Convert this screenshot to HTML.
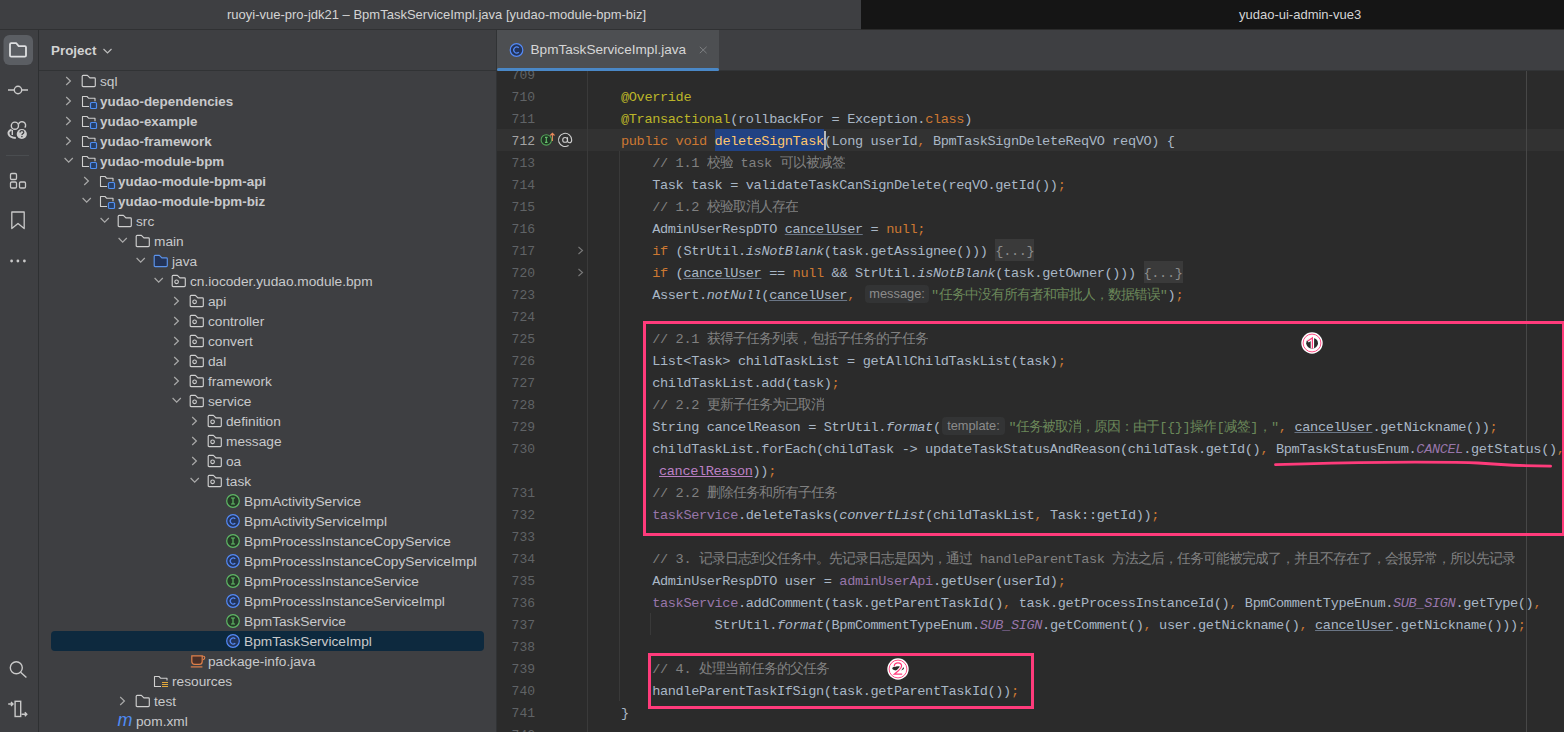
<!DOCTYPE html>
<html><head><meta charset="utf-8"><style>
*{margin:0;padding:0;box-sizing:border-box}
html,body{width:1564px;height:732px;overflow:hidden;background:#2b2b2b}
body{position:relative;font-family:"Liberation Sans",sans-serif}
.abs{position:absolute}
.title{left:0;top:0;height:29px;color:#d4d4d4;font-size:13px;line-height:29px;white-space:nowrap}
.tree{position:absolute;white-space:nowrap;font-size:13.7px;color:#c8c9cb;line-height:20px;height:20px}
.tree b{font-weight:bold;font-size:13.4px}
.code{position:absolute;left:589.8px;white-space:pre;font-family:"Liberation Mono",monospace;font-size:13.6px;letter-spacing:-0.36px;line-height:22px;height:22px;color:#a9b7c6}
.ln{position:absolute;left:497px;width:38px;text-align:right;white-space:pre;font-family:"Liberation Mono",monospace;font-size:13px;line-height:22px;color:#606366}
.k{color:#cc7832}
.an{color:#bbb529}
.cm{color:#808080}
.s{color:#6a8759}
.f{color:#9876aa}
.i{font-style:italic}
.u{text-decoration:underline;text-decoration-color:#6a7585;text-decoration-thickness:1px;text-underline-offset:0.5px}
.z{display:inline-block;vertical-align:top;overflow:hidden;height:22px;width:13px}
.hint{display:inline-block;vertical-align:top;position:relative;height:22px}
.hint i{position:absolute;top:0px;letter-spacing:0;height:18px;border-radius:4px;background:#333435;color:#8b8b8b;font-style:normal;font-family:"Liberation Sans",sans-serif;font-size:12.8px;line-height:18px;text-align:center}
.fold{display:inline-block;vertical-align:top;height:22px;margin-top:-2px;padding-top:2px;background:#3a3a3a;color:#8c8c8c}
</style></head>
<body>
<div class="abs" style="left:0;top:0;width:861px;height:29px;background:#3e3f42"></div><div class="abs" style="left:861px;top:0;width:703px;height:29px;background:#151515"></div><div class="abs" style="left:0;top:29px;width:861px;height:1px;background:#303133"></div><div class="abs title" style="left:227px;top:0">ruoyi-vue-pro-jdk21 – BpmTaskServiceImpl.java [yudao-module-bpm-biz]</div><div class="abs title" style="left:1239px;top:0">yudao-ui-admin-vue3</div><div class="abs" style="left:0;top:30px;width:38px;height:702px;background:#3e3f42"></div><div class="abs" style="left:38px;top:30px;width:1px;height:702px;background:#2e3032"></div><div class="abs" style="left:39px;top:30px;width:458px;height:702px;background:#3e3f42"></div><div class="abs" style="left:39px;top:70px;width:458px;height:1px;background:#313335"></div><div class="abs" style="left:51px;top:41px;font-size:13.4px;font-weight:bold;color:#d2d2d2;line-height:20px">Project</div><svg class="abs" style="left:102px;top:48px" width="12" height="8"><path d="M1.5 1 L5.5 5 L9.5 1" fill="none" stroke="#bdbdbd" stroke-width="1.2"/></svg>
<svg class="abs" style="left:0;top:30px" width="38" height="702">
 <rect x="3.5" y="5" width="29.5" height="30" rx="6" fill="#5b5e63"/>
 <path d="M11.2 13.2 h5.1 l2.4 2.9 h6.1 q1.2 0 1.2 1.2 v8.2 q0 1.2 -1.2 1.2 h-13.6 q-1.2 0 -1.2 -1.2 v-11.1 q0 -1.2 1.2 -1.2 z" fill="none" stroke="#dfe0e2" stroke-width="1.8" stroke-linejoin="round"/>
 <g fill="none" stroke="#c9c9c9" stroke-width="1.4">
  <path d="M8 60 h6.3 M21.7 60 h6.3"/><circle cx="18" cy="60" r="3.7"/>
 </g>
 <g fill="none" stroke="#cdcdcd" stroke-width="1.4">
  <circle cx="14.9" cy="95.7" r="3.6"/>
  <path d="M18.6 94.2 A3.6 3.6 0 1 1 24.8 97.6"/>
  <path d="M12.3 100 v5"/>
 </g>
 <path d="M11.6 99.6 C 6.8 101.5, 7.2 107.3, 15.8 107.9" fill="none" stroke="#cdcdcd" stroke-width="2"/>
 <circle cx="21.8" cy="104" r="5.6" fill="#3e3f42"/>
 <circle cx="21.8" cy="104" r="5.1" fill="#cdcdcd"/>
 <path d="M20 102.5 q0 -1.9 1.9 -1.9 q1.9 0 1.9 1.7 q0 1.1 -1.2 1.6 q-0.6 0.3 -0.6 1" fill="none" stroke="#3e3f42" stroke-width="1.3"/>
 <circle cx="21.9" cy="106.6" r="0.8" fill="#3e3f42"/>
 <path d="M6 125.5 h23" stroke="#4a4d50" stroke-width="1"/>
 <g fill="none" stroke="#c9c9c9" stroke-width="1.3">
  <rect x="10.5" y="143.5" width="6" height="6" rx="1.2"/><rect x="10.5" y="152" width="6" height="6" rx="1.2"/><rect x="19.5" y="152" width="6" height="6" rx="1.2"/>
  <path d="M11.8 182 v16.5 l6.2 -5 l6.2 5 v-16.5 z" stroke-linejoin="round"/>
 </g>
 <g fill="#c9c9c9"><circle cx="11.6" cy="231" r="1.4"/><circle cx="17.9" cy="231" r="1.4"/><circle cx="24.4" cy="231" r="1.4"/></g>
 <g fill="none" stroke="#c9c9c9" stroke-width="1.4">
  <circle cx="16.3" cy="637.8" r="6"/><path d="M20.6 642.3 l5.8 5.3"/>
  <rect x="15.1" y="671.3" width="5.6" height="15.2"/>
  <path d="M8.2 674 h4.5 M11 672 l2 2 l-2 2 M21.5 684.2 h5 M24.8 682.2 l2 2 l-2 2"/>
 </g>
</svg><div class="abs" style="left:51px;top:631px;width:433px;height:20px;border-radius:4px;background:#0d293e"></div><svg class="abs" style="left:64.8px;top:76px" width="8" height="11"><path d="M1.2 1 L5.4 5 L1.2 9" fill="none" stroke="#a9a9a9" stroke-width="1.2"/></svg><svg class="abs" style="left:81px;top:73px" width="16" height="16"><path d="M1.2 3.3 q0 -1 1 -1 h4.2 l2.5 2.6 h4.5 q0.9 0 0.9 0.9 v6.8 q0 1 -1 1 h-11.1 q-1 0 -1 -1 z" fill="#3e3f42" stroke="#cfcfcf" stroke-width="1.15" stroke-linejoin="round"/></svg><div class="tree" style="left:100px;top:72px">sql</div><svg class="abs" style="left:64.8px;top:96px" width="8" height="11"><path d="M1.2 1 L5.4 5 L1.2 9" fill="none" stroke="#a9a9a9" stroke-width="1.2"/></svg><svg class="abs" style="left:81px;top:93px" width="18" height="18"><path d="M8 13.5 h-6.5 v-10 h4.5 l1.8 1.8 h6.2 v3" fill="none" stroke="#cfcfcf" stroke-width="1.1" stroke-linejoin="round"/><rect x="9.5" y="9.5" width="6" height="6" rx="1" fill="#253e66" stroke="#4f8ff2" stroke-width="1.2"/></svg><div class="tree" style="left:100px;top:92px"><b>yudao-dependencies</b></div><svg class="abs" style="left:64.8px;top:116px" width="8" height="11"><path d="M1.2 1 L5.4 5 L1.2 9" fill="none" stroke="#a9a9a9" stroke-width="1.2"/></svg><svg class="abs" style="left:81px;top:113px" width="18" height="18"><path d="M8 13.5 h-6.5 v-10 h4.5 l1.8 1.8 h6.2 v3" fill="none" stroke="#cfcfcf" stroke-width="1.1" stroke-linejoin="round"/><rect x="9.5" y="9.5" width="6" height="6" rx="1" fill="#253e66" stroke="#4f8ff2" stroke-width="1.2"/></svg><div class="tree" style="left:100px;top:112px"><b>yudao-example</b></div><svg class="abs" style="left:64.8px;top:136px" width="8" height="11"><path d="M1.2 1 L5.4 5 L1.2 9" fill="none" stroke="#a9a9a9" stroke-width="1.2"/></svg><svg class="abs" style="left:81px;top:133px" width="18" height="18"><path d="M8 13.5 h-6.5 v-10 h4.5 l1.8 1.8 h6.2 v3" fill="none" stroke="#cfcfcf" stroke-width="1.1" stroke-linejoin="round"/><rect x="9.5" y="9.5" width="6" height="6" rx="1" fill="#253e66" stroke="#4f8ff2" stroke-width="1.2"/></svg><div class="tree" style="left:100px;top:132px"><b>yudao-framework</b></div><svg class="abs" style="left:64px;top:157px" width="11" height="8"><path d="M0.6 1 L4.7 5.1 L8.8 1" fill="none" stroke="#a9a9a9" stroke-width="1.2"/></svg><svg class="abs" style="left:81px;top:153px" width="18" height="18"><path d="M8 13.5 h-6.5 v-10 h4.5 l1.8 1.8 h6.2 v3" fill="none" stroke="#cfcfcf" stroke-width="1.1" stroke-linejoin="round"/><rect x="9.5" y="9.5" width="6" height="6" rx="1" fill="#253e66" stroke="#4f8ff2" stroke-width="1.2"/></svg><div class="tree" style="left:100px;top:152px"><b>yudao-module-bpm</b></div><svg class="abs" style="left:82.8px;top:176px" width="8" height="11"><path d="M1.2 1 L5.4 5 L1.2 9" fill="none" stroke="#a9a9a9" stroke-width="1.2"/></svg><svg class="abs" style="left:99px;top:173px" width="18" height="18"><path d="M8 13.5 h-6.5 v-10 h4.5 l1.8 1.8 h6.2 v3" fill="none" stroke="#cfcfcf" stroke-width="1.1" stroke-linejoin="round"/><rect x="9.5" y="9.5" width="6" height="6" rx="1" fill="#253e66" stroke="#4f8ff2" stroke-width="1.2"/></svg><div class="tree" style="left:118px;top:172px"><b>yudao-module-bpm-api</b></div><svg class="abs" style="left:82px;top:197px" width="11" height="8"><path d="M0.6 1 L4.7 5.1 L8.8 1" fill="none" stroke="#a9a9a9" stroke-width="1.2"/></svg><svg class="abs" style="left:99px;top:193px" width="18" height="18"><path d="M8 13.5 h-6.5 v-10 h4.5 l1.8 1.8 h6.2 v3" fill="none" stroke="#cfcfcf" stroke-width="1.1" stroke-linejoin="round"/><rect x="9.5" y="9.5" width="6" height="6" rx="1" fill="#253e66" stroke="#4f8ff2" stroke-width="1.2"/></svg><div class="tree" style="left:118px;top:192px"><b>yudao-module-bpm-biz</b></div><svg class="abs" style="left:100px;top:217px" width="11" height="8"><path d="M0.6 1 L4.7 5.1 L8.8 1" fill="none" stroke="#a9a9a9" stroke-width="1.2"/></svg><svg class="abs" style="left:117px;top:213px" width="16" height="16"><path d="M1.2 3.3 q0 -1 1 -1 h4.2 l2.5 2.6 h4.5 q0.9 0 0.9 0.9 v6.8 q0 1 -1 1 h-11.1 q-1 0 -1 -1 z" fill="#3e3f42" stroke="#cfcfcf" stroke-width="1.15" stroke-linejoin="round"/></svg><div class="tree" style="left:136px;top:212px">src</div><svg class="abs" style="left:118px;top:237px" width="11" height="8"><path d="M0.6 1 L4.7 5.1 L8.8 1" fill="none" stroke="#a9a9a9" stroke-width="1.2"/></svg><svg class="abs" style="left:135px;top:233px" width="16" height="16"><path d="M1.2 3.3 q0 -1 1 -1 h4.2 l2.5 2.6 h4.5 q0.9 0 0.9 0.9 v6.8 q0 1 -1 1 h-11.1 q-1 0 -1 -1 z" fill="#3e3f42" stroke="#cfcfcf" stroke-width="1.15" stroke-linejoin="round"/></svg><div class="tree" style="left:154px;top:232px">main</div><svg class="abs" style="left:136px;top:257px" width="11" height="8"><path d="M0.6 1 L4.7 5.1 L8.8 1" fill="none" stroke="#a9a9a9" stroke-width="1.2"/></svg><svg class="abs" style="left:153px;top:253px" width="16" height="16"><path d="M1.2 3.3 q0 -1 1 -1 h4.2 l2.5 2.6 h4.5 q0.9 0 0.9 0.9 v6.8 q0 1 -1 1 h-11.1 q-1 0 -1 -1 z" fill="#233356" stroke="#5b93ec" stroke-width="1.15" stroke-linejoin="round"/></svg><div class="tree" style="left:172px;top:252px">java</div><svg class="abs" style="left:154px;top:277px" width="11" height="8"><path d="M0.6 1 L4.7 5.1 L8.8 1" fill="none" stroke="#a9a9a9" stroke-width="1.2"/></svg><svg class="abs" style="left:171px;top:273px" width="16" height="16"><path d="M1.2 3.3 q0 -1 1 -1 h4.2 l2.5 2.6 h4.5 q0.9 0 0.9 0.9 v6.8 q0 1 -1 1 h-11.1 q-1 0 -1 -1 z" fill="none" stroke="#cfcfcf" stroke-width="1.15" stroke-linejoin="round"/><circle cx="5.6" cy="8.8" r="1.8" fill="none" stroke="#cfcfcf" stroke-width="1.1"/></svg><div class="tree" style="left:190px;top:272px">cn.iocoder.yudao.module.bpm</div><svg class="abs" style="left:172.8px;top:296px" width="8" height="11"><path d="M1.2 1 L5.4 5 L1.2 9" fill="none" stroke="#a9a9a9" stroke-width="1.2"/></svg><svg class="abs" style="left:189px;top:293px" width="16" height="16"><path d="M1.2 3.3 q0 -1 1 -1 h4.2 l2.5 2.6 h4.5 q0.9 0 0.9 0.9 v6.8 q0 1 -1 1 h-11.1 q-1 0 -1 -1 z" fill="none" stroke="#cfcfcf" stroke-width="1.15" stroke-linejoin="round"/><circle cx="5.6" cy="8.8" r="1.8" fill="none" stroke="#cfcfcf" stroke-width="1.1"/></svg><div class="tree" style="left:208px;top:292px">api</div><svg class="abs" style="left:172.8px;top:316px" width="8" height="11"><path d="M1.2 1 L5.4 5 L1.2 9" fill="none" stroke="#a9a9a9" stroke-width="1.2"/></svg><svg class="abs" style="left:189px;top:313px" width="16" height="16"><path d="M1.2 3.3 q0 -1 1 -1 h4.2 l2.5 2.6 h4.5 q0.9 0 0.9 0.9 v6.8 q0 1 -1 1 h-11.1 q-1 0 -1 -1 z" fill="none" stroke="#cfcfcf" stroke-width="1.15" stroke-linejoin="round"/><circle cx="5.6" cy="8.8" r="1.8" fill="none" stroke="#cfcfcf" stroke-width="1.1"/></svg><div class="tree" style="left:208px;top:312px">controller</div><svg class="abs" style="left:172.8px;top:336px" width="8" height="11"><path d="M1.2 1 L5.4 5 L1.2 9" fill="none" stroke="#a9a9a9" stroke-width="1.2"/></svg><svg class="abs" style="left:189px;top:333px" width="16" height="16"><path d="M1.2 3.3 q0 -1 1 -1 h4.2 l2.5 2.6 h4.5 q0.9 0 0.9 0.9 v6.8 q0 1 -1 1 h-11.1 q-1 0 -1 -1 z" fill="none" stroke="#cfcfcf" stroke-width="1.15" stroke-linejoin="round"/><circle cx="5.6" cy="8.8" r="1.8" fill="none" stroke="#cfcfcf" stroke-width="1.1"/></svg><div class="tree" style="left:208px;top:332px">convert</div><svg class="abs" style="left:172.8px;top:356px" width="8" height="11"><path d="M1.2 1 L5.4 5 L1.2 9" fill="none" stroke="#a9a9a9" stroke-width="1.2"/></svg><svg class="abs" style="left:189px;top:353px" width="16" height="16"><path d="M1.2 3.3 q0 -1 1 -1 h4.2 l2.5 2.6 h4.5 q0.9 0 0.9 0.9 v6.8 q0 1 -1 1 h-11.1 q-1 0 -1 -1 z" fill="none" stroke="#cfcfcf" stroke-width="1.15" stroke-linejoin="round"/><circle cx="5.6" cy="8.8" r="1.8" fill="none" stroke="#cfcfcf" stroke-width="1.1"/></svg><div class="tree" style="left:208px;top:352px">dal</div><svg class="abs" style="left:172.8px;top:376px" width="8" height="11"><path d="M1.2 1 L5.4 5 L1.2 9" fill="none" stroke="#a9a9a9" stroke-width="1.2"/></svg><svg class="abs" style="left:189px;top:373px" width="16" height="16"><path d="M1.2 3.3 q0 -1 1 -1 h4.2 l2.5 2.6 h4.5 q0.9 0 0.9 0.9 v6.8 q0 1 -1 1 h-11.1 q-1 0 -1 -1 z" fill="none" stroke="#cfcfcf" stroke-width="1.15" stroke-linejoin="round"/><circle cx="5.6" cy="8.8" r="1.8" fill="none" stroke="#cfcfcf" stroke-width="1.1"/></svg><div class="tree" style="left:208px;top:372px">framework</div><svg class="abs" style="left:172px;top:397px" width="11" height="8"><path d="M0.6 1 L4.7 5.1 L8.8 1" fill="none" stroke="#a9a9a9" stroke-width="1.2"/></svg><svg class="abs" style="left:189px;top:393px" width="16" height="16"><path d="M1.2 3.3 q0 -1 1 -1 h4.2 l2.5 2.6 h4.5 q0.9 0 0.9 0.9 v6.8 q0 1 -1 1 h-11.1 q-1 0 -1 -1 z" fill="none" stroke="#cfcfcf" stroke-width="1.15" stroke-linejoin="round"/><circle cx="5.6" cy="8.8" r="1.8" fill="none" stroke="#cfcfcf" stroke-width="1.1"/></svg><div class="tree" style="left:208px;top:392px">service</div><svg class="abs" style="left:190.8px;top:416px" width="8" height="11"><path d="M1.2 1 L5.4 5 L1.2 9" fill="none" stroke="#a9a9a9" stroke-width="1.2"/></svg><svg class="abs" style="left:207px;top:413px" width="16" height="16"><path d="M1.2 3.3 q0 -1 1 -1 h4.2 l2.5 2.6 h4.5 q0.9 0 0.9 0.9 v6.8 q0 1 -1 1 h-11.1 q-1 0 -1 -1 z" fill="none" stroke="#cfcfcf" stroke-width="1.15" stroke-linejoin="round"/><circle cx="5.6" cy="8.8" r="1.8" fill="none" stroke="#cfcfcf" stroke-width="1.1"/></svg><div class="tree" style="left:226px;top:412px">definition</div><svg class="abs" style="left:190.8px;top:436px" width="8" height="11"><path d="M1.2 1 L5.4 5 L1.2 9" fill="none" stroke="#a9a9a9" stroke-width="1.2"/></svg><svg class="abs" style="left:207px;top:433px" width="16" height="16"><path d="M1.2 3.3 q0 -1 1 -1 h4.2 l2.5 2.6 h4.5 q0.9 0 0.9 0.9 v6.8 q0 1 -1 1 h-11.1 q-1 0 -1 -1 z" fill="none" stroke="#cfcfcf" stroke-width="1.15" stroke-linejoin="round"/><circle cx="5.6" cy="8.8" r="1.8" fill="none" stroke="#cfcfcf" stroke-width="1.1"/></svg><div class="tree" style="left:226px;top:432px">message</div><svg class="abs" style="left:190.8px;top:456px" width="8" height="11"><path d="M1.2 1 L5.4 5 L1.2 9" fill="none" stroke="#a9a9a9" stroke-width="1.2"/></svg><svg class="abs" style="left:207px;top:453px" width="16" height="16"><path d="M1.2 3.3 q0 -1 1 -1 h4.2 l2.5 2.6 h4.5 q0.9 0 0.9 0.9 v6.8 q0 1 -1 1 h-11.1 q-1 0 -1 -1 z" fill="none" stroke="#cfcfcf" stroke-width="1.15" stroke-linejoin="round"/><circle cx="5.6" cy="8.8" r="1.8" fill="none" stroke="#cfcfcf" stroke-width="1.1"/></svg><div class="tree" style="left:226px;top:452px">oa</div><svg class="abs" style="left:190px;top:477px" width="11" height="8"><path d="M0.6 1 L4.7 5.1 L8.8 1" fill="none" stroke="#a9a9a9" stroke-width="1.2"/></svg><svg class="abs" style="left:207px;top:473px" width="16" height="16"><path d="M1.2 3.3 q0 -1 1 -1 h4.2 l2.5 2.6 h4.5 q0.9 0 0.9 0.9 v6.8 q0 1 -1 1 h-11.1 q-1 0 -1 -1 z" fill="none" stroke="#cfcfcf" stroke-width="1.15" stroke-linejoin="round"/><circle cx="5.6" cy="8.8" r="1.8" fill="none" stroke="#cfcfcf" stroke-width="1.1"/></svg><div class="tree" style="left:226px;top:472px">task</div><svg class="abs" style="left:225px;top:493px" width="16" height="16"><circle cx="8" cy="8" r="6.3" fill="#253a28" stroke="#5fb865" stroke-width="1.2"/><path d="M6 5 h4 M6 11 h4 M8 5 v6" stroke="#5fb865" stroke-width="1.2"/></svg><div class="tree" style="left:244px;top:492px">BpmActivityService</div><svg class="abs" style="left:225px;top:513px" width="16" height="16"><circle cx="8" cy="8" r="6.3" fill="#23345a" stroke="#548af7" stroke-width="1.2"/><path d="M10.3 5.8 a3 3 0 1 0 0 4.4" fill="none" stroke="#548af7" stroke-width="1.2"/></svg><div class="tree" style="left:244px;top:512px">BpmActivityServiceImpl</div><svg class="abs" style="left:225px;top:533px" width="16" height="16"><circle cx="8" cy="8" r="6.3" fill="#253a28" stroke="#5fb865" stroke-width="1.2"/><path d="M6 5 h4 M6 11 h4 M8 5 v6" stroke="#5fb865" stroke-width="1.2"/></svg><div class="tree" style="left:244px;top:532px">BpmProcessInstanceCopyService</div><svg class="abs" style="left:225px;top:553px" width="16" height="16"><circle cx="8" cy="8" r="6.3" fill="#23345a" stroke="#548af7" stroke-width="1.2"/><path d="M10.3 5.8 a3 3 0 1 0 0 4.4" fill="none" stroke="#548af7" stroke-width="1.2"/></svg><div class="tree" style="left:244px;top:552px">BpmProcessInstanceCopyServiceImpl</div><svg class="abs" style="left:225px;top:573px" width="16" height="16"><circle cx="8" cy="8" r="6.3" fill="#253a28" stroke="#5fb865" stroke-width="1.2"/><path d="M6 5 h4 M6 11 h4 M8 5 v6" stroke="#5fb865" stroke-width="1.2"/></svg><div class="tree" style="left:244px;top:572px">BpmProcessInstanceService</div><svg class="abs" style="left:225px;top:593px" width="16" height="16"><circle cx="8" cy="8" r="6.3" fill="#23345a" stroke="#548af7" stroke-width="1.2"/><path d="M10.3 5.8 a3 3 0 1 0 0 4.4" fill="none" stroke="#548af7" stroke-width="1.2"/></svg><div class="tree" style="left:244px;top:592px">BpmProcessInstanceServiceImpl</div><svg class="abs" style="left:225px;top:613px" width="16" height="16"><circle cx="8" cy="8" r="6.3" fill="#253a28" stroke="#5fb865" stroke-width="1.2"/><path d="M6 5 h4 M6 11 h4 M8 5 v6" stroke="#5fb865" stroke-width="1.2"/></svg><div class="tree" style="left:244px;top:612px">BpmTaskService</div><svg class="abs" style="left:225px;top:633px" width="16" height="16"><circle cx="8" cy="8" r="6.3" fill="#23345a" stroke="#548af7" stroke-width="1.2"/><path d="M10.3 5.8 a3 3 0 1 0 0 4.4" fill="none" stroke="#548af7" stroke-width="1.2"/></svg><div class="tree" style="left:244px;top:632px">BpmTaskServiceImpl</div><svg class="abs" style="left:189px;top:653px" width="18" height="16"><path d="M2.8 2.9 h10.4 v5.6 q0 2.9 -2.9 2.9 h-4.6 q-2.9 0 -2.9 -2.9 z" fill="#4a3028" stroke="#e0804a" stroke-width="1.2"/><path d="M13.2 3.2 h1.2 q1.4 0 1.4 1.3 q0 1.7 -1.7 2.3" fill="none" stroke="#e0804a" stroke-width="1.1"/><path d="M1.8 13.9 h11.6" stroke="#e0804a" stroke-width="1.2"/></svg><div class="tree" style="left:208px;top:652px">package-info.java</div><svg class="abs" style="left:153px;top:673px" width="16" height="16"><path d="M8 13.5 h-6.5 v-10 h4.5 l1.8 1.8 h6.2 v2.2" fill="none" stroke="#cfcfcf" stroke-width="1.1" stroke-linejoin="round"/><path d="M9 9.5 h6 M9 11.5 h6 M9 13.5 h6" stroke="#e3a93c" stroke-width="1.1"/></svg><div class="tree" style="left:172px;top:672px">resources</div><svg class="abs" style="left:118.8px;top:696px" width="8" height="11"><path d="M1.2 1 L5.4 5 L1.2 9" fill="none" stroke="#a9a9a9" stroke-width="1.2"/></svg><svg class="abs" style="left:135px;top:693px" width="16" height="16"><path d="M1.2 3.3 q0 -1 1 -1 h4.2 l2.5 2.6 h4.5 q0.9 0 0.9 0.9 v6.8 q0 1 -1 1 h-11.1 q-1 0 -1 -1 z" fill="#3e3f42" stroke="#cfcfcf" stroke-width="1.15" stroke-linejoin="round"/></svg><div class="tree" style="left:154px;top:692px">test</div><div class="abs" style="left:117.5px;top:710px;font-size:18px;font-style:italic;color:#4f8cf5;line-height:20px;font-family:Liberation Sans">m</div><div class="tree" style="left:136px;top:712px">pom.xml</div><div class="abs" style="left:496px;top:30px;width:1px;height:702px;background:#313335"></div><div class="abs" style="left:497px;top:71px;width:1067px;height:661px;background:#2b2b2b;overflow:hidden" id="ed"></div><div class="abs" style="left:497px;top:129px;width:1067px;height:22px;background:#323232"></div><div class="abs" style="left:587px;top:71px;width:1px;height:661px;background:#3a3a3a"></div><div class="abs" style="left:1526px;top:71px;width:1px;height:661px;background:#474747"></div><div class="abs" style="left:619px;top:151px;width:1px;height:550px;background:#393939"></div><div class="abs" style="left:650px;top:613px;width:1px;height:22px;background:#393939"></div><div class="ln" style="top:65px;color:#606366">709</div><div class="ln" style="top:87px;color:#606366">710</div><div class="code" style="top:87px">    <span class="an">@Override</span></div><div class="ln" style="top:109px;color:#606366">711</div><div class="code" style="top:109px">    <span class="an">@Transactional</span>(rollbackFor = Exception.<span class="k">class</span>)</div><div class="ln" style="top:131px;color:#a4a3a3">712</div><div class="code" style="top:131px">    <span class="k">public void </span><span style="display:inline-block;vertical-align:top;height:22px;margin-top:-2px;padding-top:2px;background:#214283;color:#ffc66d">deleteSignTask</span>(Long userId<span class="k">,</span> BpmTaskSignDeleteReqVO reqVO) {</div><div class="ln" style="top:153px;color:#606366">713</div><div class="code" style="top:153px">        <span class="cm">// 1.1 <span class="z">校</span><span class="z">验</span> task <span class="z">可</span><span class="z">以</span><span class="z">被</span><span class="z">减</span><span class="z">签</span></span></div><div class="ln" style="top:175px;color:#606366">714</div><div class="code" style="top:175px">        Task task = validateTaskCanSignDelete(reqVO.getId())<span class="k">;</span></div><div class="ln" style="top:197px;color:#606366">715</div><div class="code" style="top:197px">        <span class="cm">// 1.2 <span class="z">校</span><span class="z">验</span><span class="z">取</span><span class="z">消</span><span class="z">人</span><span class="z">存</span><span class="z">在</span></span></div><div class="ln" style="top:219px;color:#606366">716</div><div class="code" style="top:219px">        AdminUserRespDTO <span class="u">cancelUser</span> = <span class="k">null;</span></div><div class="ln" style="top:241px;color:#606366">717</div><div class="code" style="top:241px">        <span class="k">if</span> (StrUtil.<span class="i">isNotBlank</span>(task.getAssignee())) <span class="fold">{...}</span></div><div class="ln" style="top:263px;color:#606366">720</div><div class="code" style="top:263px">        <span class="k">if</span> (<span class="u">cancelUser</span> == <span class="k">null</span> &amp;&amp; StrUtil.<span class="i">isNotBlank</span>(task.getOwner())) <span class="fold">{...}</span></div><div class="ln" style="top:285px;color:#606366">723</div><div class="code" style="top:285px">        Assert.<span class="i">notNull</span>(<span class="u">cancelUser</span><span class="k">,</span> <span class="hint" style="width:68.2px"><i style="left:2.5px;width:63.6px">message:</i></span><span class="s">&quot;<span class="z">任</span><span class="z">务</span><span class="z">中</span><span class="z">没</span><span class="z">有</span><span class="z">所</span><span class="z">有</span><span class="z">者</span><span class="z">和</span><span class="z">审</span><span class="z">批</span><span class="z">人</span><span class="z">，</span><span class="z">数</span><span class="z">据</span><span class="z">错</span><span class="z">误</span>&quot;</span>)<span class="k">;</span></div><div class="ln" style="top:307px;color:#606366">724</div><div class="ln" style="top:329px;color:#606366">725</div><div class="code" style="top:329px">        <span class="cm">// 2.1 <span class="z">获</span><span class="z">得</span><span class="z">子</span><span class="z">任</span><span class="z">务</span><span class="z">列</span><span class="z">表</span><span class="z">，</span><span class="z">包</span><span class="z">括</span><span class="z">子</span><span class="z">任</span><span class="z">务</span><span class="z">的</span><span class="z">子</span><span class="z">任</span><span class="z">务</span></span></div><div class="ln" style="top:351px;color:#606366">726</div><div class="code" style="top:351px">        List&lt;Task&gt; childTaskList = getAllChildTaskList(task)<span class="k">;</span></div><div class="ln" style="top:373px;color:#606366">727</div><div class="code" style="top:373px">        childTaskList.add(task)<span class="k">;</span></div><div class="ln" style="top:395px;color:#606366">728</div><div class="code" style="top:395px">        <span class="cm">// 2.2 <span class="z">更</span><span class="z">新</span><span class="z">子</span><span class="z">任</span><span class="z">务</span><span class="z">为</span><span class="z">已</span><span class="z">取</span><span class="z">消</span></span></div><div class="ln" style="top:417px;color:#606366">729</div><div class="code" style="top:417px">        String cancelReason = StrUtil.<span class="i">format</span>(<span class="hint" style="width:67.7px"><i style="left:1.5px;width:62.5px">template:</i></span><span class="s">&quot;<span class="z">任</span><span class="z">务</span><span class="z">被</span><span class="z">取</span><span class="z">消</span><span class="z">，</span><span class="z">原</span><span class="z">因</span><span class="z">：</span><span class="z">由</span><span class="z">于</span>[{}]<span class="z">操</span><span class="z">作</span>[<span class="z">减</span><span class="z">签</span>]<span class="z">，</span>&quot;</span><span class="k">,</span> <span class="u">cancelUser</span>.getNickname())<span class="k">;</span></div><div class="ln" style="top:439px;color:#606366">730</div><div class="code" style="top:439px">        childTaskList.forEach(childTask -&gt; updateTaskStatusAndReason(childTask.getId()<span class="k">,</span> BpmTaskStatusEnum.<span class="f i">CANCEL</span>.getStatus()<span class="k">,</span></div><div class="code" style="top:461px">         <span class="u" style="color:#bb80c4;text-decoration-color:#bb80c4;margin-left:-1px">cancelReason</span>))<span class="k">;</span></div><div class="ln" style="top:483px;color:#606366">731</div><div class="code" style="top:483px">        <span class="cm">// 2.2 <span class="z">删</span><span class="z">除</span><span class="z">任</span><span class="z">务</span><span class="z">和</span><span class="z">所</span><span class="z">有</span><span class="z">子</span><span class="z">任</span><span class="z">务</span></span></div><div class="ln" style="top:505px;color:#606366">732</div><div class="code" style="top:505px">        <span class="f">taskService</span>.deleteTasks(<span class="i">convertList</span>(childTaskList<span class="k">,</span> Task::getId))<span class="k">;</span></div><div class="ln" style="top:527px;color:#606366">733</div><div class="ln" style="top:549px;color:#606366">734</div><div class="code" style="top:549px">        <span class="cm">// 3. <span class="z">记</span><span class="z">录</span><span class="z">日</span><span class="z">志</span><span class="z">到</span><span class="z">父</span><span class="z">任</span><span class="z">务</span><span class="z">中</span><span class="z">。</span><span class="z">先</span><span class="z">记</span><span class="z">录</span><span class="z">日</span><span class="z">志</span><span class="z">是</span><span class="z">因</span><span class="z">为</span><span class="z">，</span><span class="z">通</span><span class="z">过</span> handleParentTask <span class="z">方</span><span class="z">法</span><span class="z">之</span><span class="z">后</span><span class="z">，</span><span class="z">任</span><span class="z">务</span><span class="z">可</span><span class="z">能</span><span class="z">被</span><span class="z">完</span><span class="z">成</span><span class="z">了</span><span class="z">，</span><span class="z">并</span><span class="z">且</span><span class="z">不</span><span class="z">存</span><span class="z">在</span><span class="z">了</span><span class="z">，</span><span class="z">会</span><span class="z">报</span><span class="z">异</span><span class="z">常</span><span class="z">，</span><span class="z">所</span><span class="z">以</span><span class="z">先</span><span class="z">记</span><span class="z">录</span></span></div><div class="ln" style="top:571px;color:#606366">735</div><div class="code" style="top:571px">        AdminUserRespDTO user = <span class="f">adminUserApi</span>.getUser(userId)<span class="k">;</span></div><div class="ln" style="top:593px;color:#606366">736</div><div class="code" style="top:593px">        <span class="f">taskService</span>.addComment(task.getParentTaskId()<span class="k">,</span> task.getProcessInstanceId()<span class="k">,</span> BpmCommentTypeEnum.<span class="f i">SUB_SIGN</span>.getType()<span class="k">,</span></div><div class="ln" style="top:615px;color:#606366">737</div><div class="code" style="top:615px">                StrUtil.<span class="i">format</span>(BpmCommentTypeEnum.<span class="f i">SUB_SIGN</span>.getComment()<span class="k">,</span> user.getNickname()<span class="k">,</span> <span class="u">cancelUser</span>.getNickname()))<span class="k">;</span></div><div class="ln" style="top:637px;color:#606366">738</div><div class="ln" style="top:659px;color:#606366">739</div><div class="code" style="top:659px">        <span class="cm">// 4. <span class="z">处</span><span class="z">理</span><span class="z">当</span><span class="z">前</span><span class="z">任</span><span class="z">务</span><span class="z">的</span><span class="z">父</span><span class="z">任</span><span class="z">务</span></span></div><div class="ln" style="top:681px;color:#606366">740</div><div class="code" style="top:681px">        handleParentTaskIfSign(task.getParentTaskId())<span class="k">;</span></div><div class="ln" style="top:703px;color:#606366">741</div><div class="code" style="top:703px">    }</div><div class="ln" style="top:725px;color:#606366">742</div><div class="abs" style="left:824px;top:131px;width:2px;height:19px;background:#b9b9b9"></div><svg class="abs" style="left:538px;top:130px" width="40" height="20">
<circle cx="8.3" cy="9.9" r="5.2" fill="#1f3323" stroke="#52a258" stroke-width="1.1"/><path d="M7.0 7.4 h2.6 M7.0 12.4 h2.6 M8.3 7.4 v5" stroke="#66c16b" stroke-width="1.1"/>
<path d="M14.4 11 v-7.6 M12.3 5.5 L14.4 3.3 L16.5 5.5" fill="none" stroke="#e8895a" stroke-width="1.1"/>
<path d="M33.7 9.9 A6.6 6.6 0 1 0 30.6 15.5" fill="none" stroke="#cfcfcf" stroke-width="1.1"/>
<circle cx="27.1" cy="9.9" r="2.4" fill="none" stroke="#cfcfcf" stroke-width="1.1"/>
<path d="M29.5 7.2 v3.6 q0 1.9 1.8 1.9 q2.4 0 2.4 -2.8" fill="none" stroke="#cfcfcf" stroke-width="1.1"/>
</svg><svg class="abs" style="left:577px;top:246px" width="8" height="9"><path d="M1.5 1 L5.5 4.5 L1.5 8" fill="none" stroke="#7a7a7a" stroke-width="1.1"/></svg><svg class="abs" style="left:577px;top:268px" width="8" height="9"><path d="M1.5 1 L5.5 4.5 L1.5 8" fill="none" stroke="#7a7a7a" stroke-width="1.1"/></svg><div class="abs" style="left:497px;top:30px;width:1067px;height:40px;background:#3e3f42"></div><div class="abs" style="left:497px;top:70px;width:1067px;height:1px;background:#323436"></div><div class="abs" style="left:497px;top:30px;width:222px;height:41px;background:#4d4f52"></div><div class="abs" style="left:497px;top:68px;width:222px;height:3px;border-radius:2px;background:#4a88c7"></div><svg class="abs" style="left:509px;top:42px" width="16" height="16"><circle cx="7.5" cy="8" r="6.3" fill="#23345a" stroke="#548af7" stroke-width="1.2"/><path d="M9.8 5.8 a3 3 0 1 0 0 4.4" fill="none" stroke="#548af7" stroke-width="1.2"/></svg><div class="abs" style="left:530.5px;top:40px;font-size:13.6px;line-height:20px;color:#d6d6d6;white-space:nowrap">BpmTaskServiceImpl.java</div><svg class="abs" style="left:699px;top:46px" width="9" height="8"><path d="M0.8 0.8 L7.6 7.2 M7.6 0.8 L0.8 7.2" stroke="#7d7f82" stroke-width="1"/></svg><div class="abs" style="left:643px;top:321px;width:922px;height:215px;border:3px solid #ff3b7b"></div><div class="abs" style="left:648px;top:653px;width:386px;height:56px;border:3px solid #ff3b7b"></div><svg class="abs" style="left:1300.05px;top:330.5px" width="24" height="24"><circle cx="12" cy="12" r="10.7" fill="#fff"/><circle cx="12" cy="12" r="8.9" fill="none" stroke="#ff3b7b" stroke-width="0.9"/><ellipse cx="12.1" cy="12.2" rx="5.9" ry="5.5" fill="#2b2b2b"/><path d="M7.7 10.1 L12.4 6.9 V17.6" fill="none" stroke="#fff" stroke-width="3.4" stroke-linejoin="round"/><path d="M7.7 10.1 L12.4 6.9 V17.6" fill="none" stroke="#ff3b7b" stroke-width="1.2"/></svg><svg class="abs" style="left:886.05px;top:656.5px" width="24" height="24"><circle cx="12" cy="12" r="10.7" fill="#fff"/><circle cx="12" cy="12" r="8.9" fill="none" stroke="#ff3b7b" stroke-width="0.9"/><ellipse cx="12.1" cy="11.4" rx="5.9" ry="2.2" fill="#2b2b2b"/><path d="M8.2 9.3 Q8.4 5.9 12 5.9 Q15.6 5.9 15.6 9.1 Q15.6 11.2 12.4 13.8 L8.3 17.2 H16.2" fill="none" stroke="#fff" stroke-width="3.4" stroke-linejoin="round"/><path d="M8.2 9.3 Q8.4 5.9 12 5.9 Q15.6 5.9 15.6 9.1 Q15.6 11.2 12.4 13.8 L8.3 17.2 H16.2" fill="none" stroke="#ff3b7b" stroke-width="1.2"/></svg><svg class="abs" style="left:1270px;top:455px" width="290" height="16"><path d="M5.5 9.6 L35 8.9 C60 8.1, 110 7.2, 145 7.2 S 198 7.4 208 8 C 225 9.4, 250 10.8, 280.6 11.2" fill="none" stroke="#ff3b7b" stroke-width="2.8" stroke-linecap="round"/></svg>
</body></html>
